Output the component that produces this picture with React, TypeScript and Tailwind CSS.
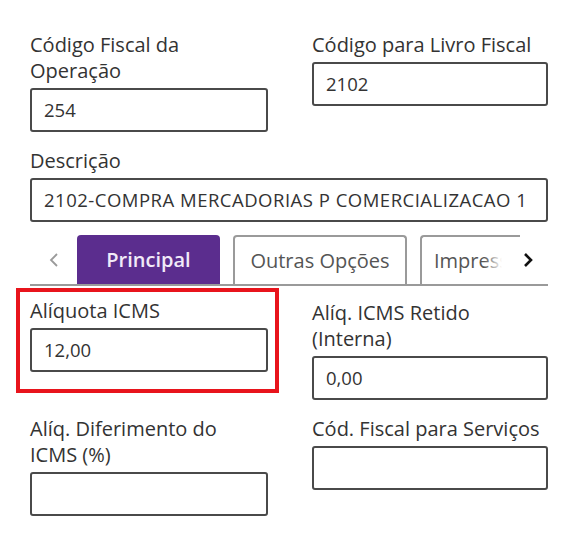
import React from "react"

const font = { fontFamily: '"Open Sans", "Liberation Sans", sans-serif' }

function Field({ label, value, className = "", valueClass = "" }: { label: React.ReactNode; value?: string; className?: string; valueClass?: string }) {
  return (
    <div className={"flex flex-col " + className}>
      <label className="text-[20px] leading-[26px] text-[#333] mb-[4px]">{label}</label>
      <div className={"h-[44px] border-2 border-[#4a4a4a] rounded-[3px] bg-white flex items-center px-[12px] text-[18.5px] text-[#333] whitespace-nowrap overflow-hidden " + valueClass}>
        {value}
      </div>
    </div>
  )
}

export default function App() {
  return (
    <div className="w-[582px] h-[534px] bg-white overflow-hidden" style={font}>
      <div className="pt-[32px] pl-[30px] w-[548px]">

        {/* ROW 1 */}
        <div className="grid grid-cols-[238px_236px] gap-x-[44px] items-start">
          <Field label={<>Código Fiscal da<br />Operação</>} value="254" />
          <Field label="Código para Livro Fiscal" value="2102" />
        </div>

        {/* DESCRICAO */}
        <Field className="mt-[16px]" valueClass="tracking-[0.5px]" label="Descrição" value="2102-COMPRA MERCADORIAS P COMERCIALIZACAO 1" />

        {/* TABS */}
        <div className="mt-[14px] h-[50px] border-b-2 border-[#9a9a9a] flex items-end relative">
          <div className="w-[47px] h-full flex items-center justify-center">
            <svg width="12" height="18" viewBox="0 0 12 18" fill="none"><path d="M9 3 L3 9 L9 15" stroke="#9a9a9a" strokeWidth="1.8" /></svg>
          </div>
          <div className="w-[143px] h-[49px] bg-[#5b2d8e] rounded-t-[4px] flex items-center justify-center text-[20px] font-semibold text-[#f1eaf8]">
            Principal
          </div>
          <div className="ml-[13px] w-[174px] h-[49px] border-2 border-b-0 border-[#9a9a9a] rounded-t-[4px] flex items-center justify-center text-[20px] text-[#555]">
            Outras Opções
          </div>
          <div className="ml-[13px] w-[100px] h-[49px] border-2 border-b-0 border-r-0 border-[#9a9a9a] rounded-tl-[4px] flex items-center pl-[12px] text-[20px] text-[#555] overflow-hidden relative">
            Impressão
            <div className="absolute right-0 top-0 h-full w-[36px] bg-gradient-to-r from-transparent via-white to-white" />
          </div>
          <div className="absolute right-[14px] top-0 h-full flex items-center">
            <svg width="12" height="18" viewBox="0 0 12 18" fill="none"><path d="M3 3 L9 9 L3 15" stroke="#111" strokeWidth="2.6" /></svg>
          </div>
        </div>

        {/* ROW 3 */}
        <div className="mt-[2px] flex items-start">
          <div className="-ml-[14px] border-4 border-[#e8141c] pl-[10px] pr-[7px] pt-[6px] pb-[17px]">
            <Field className="w-[238px]" label="Alíquota ICMS" value="12,00" />
          </div>
          <Field className="ml-[33px] w-[236px] pt-[12px]" label={<>Alíq. ICMS Retido<br />(Interna)</>} value="0,00" />
        </div>

        {/* ROW 4 */}
        <div className="mt-[16px] grid grid-cols-[238px_236px] gap-x-[44px] items-start">
          <Field label={<>Alíq. Diferimento do<br />ICMS (%)</>} />
          <Field label="Cód. Fiscal para Serviços" />
        </div>

      </div>
    </div>
  )
}
